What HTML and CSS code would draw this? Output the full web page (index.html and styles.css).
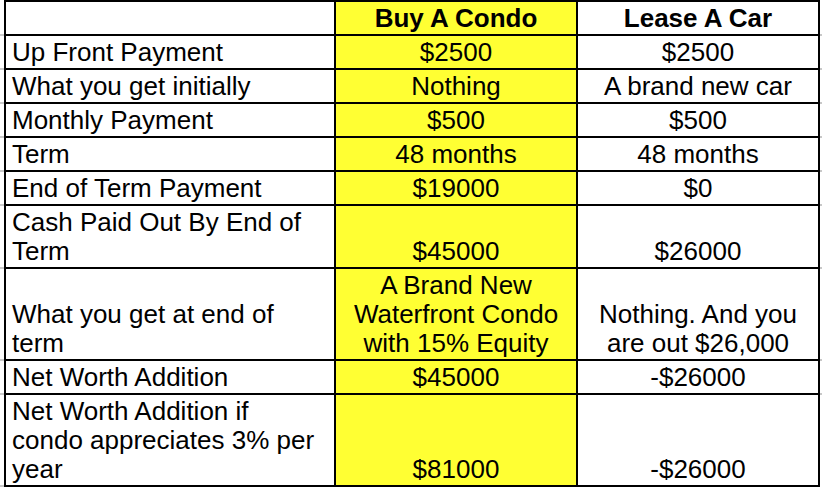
FILE: index.html
```html
<!DOCTYPE html>
<html lang="en">
<head>
<meta charset="utf-8">
<title>Buy A Condo vs Lease A Car</title>
<link rel="stylesheet" href="styles.css">
</head>
<body>
<table class="compare">
  <colgroup>
    <col class="col-label">
    <col class="col-condo">
    <col class="col-car">
  </colgroup>
  <tr class="head">
    <td class="label"></td>
    <td class="condo">Buy A Condo</td>
    <td class="car">Lease A Car</td>
  </tr>
  <tr>
    <td class="label">Up Front Payment</td>
    <td class="condo">$2500</td>
    <td class="car">$2500</td>
  </tr>
  <tr>
    <td class="label">What you get initially</td>
    <td class="condo">Nothing</td>
    <td class="car">A brand new car</td>
  </tr>
  <tr>
    <td class="label">Monthly Payment</td>
    <td class="condo">$500</td>
    <td class="car">$500</td>
  </tr>
  <tr>
    <td class="label">Term</td>
    <td class="condo">48 months</td>
    <td class="car">48 months</td>
  </tr>
  <tr>
    <td class="label">End of Term Payment</td>
    <td class="condo">$19000</td>
    <td class="car">$0</td>
  </tr>
  <tr>
    <td class="label">Cash Paid Out By End of<br>Term</td>
    <td class="condo">$45000</td>
    <td class="car">$26000</td>
  </tr>
  <tr>
    <td class="label">What you get at end of<br>term</td>
    <td class="condo">A Brand New<br>Waterfront Condo<br>with 15% Equity</td>
    <td class="car">Nothing. And you<br>are out $26,000</td>
  </tr>
  <tr>
    <td class="label">Net Worth Addition</td>
    <td class="condo">$45000</td>
    <td class="car">-$26000</td>
  </tr>
  <tr class="last">
    <td class="label">Net Worth Addition if<br>condo appreciates 3% per<br>year</td>
    <td class="condo">$81000</td>
    <td class="car">-$26000</td>
  </tr>
</table>
</body>
</html>
```

FILE: styles.css
```css
html, body {
  margin: 0;
  padding: 0;
  background: #ffffff;
}

body {
  padding: 0 0 0 4px;
}

.compare {
  border-collapse: separate;
  border-spacing: 0;
  border-top: 2px solid #000;
  border-left: 2px solid #000;
  table-layout: fixed;
  width: 816px;
  font-family: "Liberation Sans", Arial, Helvetica, sans-serif;
  font-size: 26px;
  color: #000;
}

.col-label { width: 330px; }
.col-condo { width: 242px; }
.col-car { width: 242px; }

.compare td {
  position: relative;
  border-right: 2px solid #000;
  border-bottom: 2px solid #000;
  line-height: 29px;
  padding: 2px 4px 1px 4px;
  height: 29px;
  vertical-align: bottom;
  text-align: center;
  white-space: nowrap;
}

.compare td.label {
  text-align: left;
  padding-left: 6px;
}

.compare td.condo {
  background: #ffff33;
}

.compare .head td {
  font-weight: bold;
}

/* faint spreadsheet gridline stubs outside the table */
.compare td.label::before {
  content: "";
  position: absolute;
  left: -6px;
  bottom: -2px;
  width: 4px;
  height: 2px;
  background: #c8c8c8;
}

.compare td.car::after {
  content: "";
  position: absolute;
  right: -5px;
  bottom: -2px;
  width: 3px;
  height: 2px;
  background: #c8c8c8;
}

.compare .last td::after {
  content: "";
  position: absolute;
  right: -2px;
  bottom: -5px;
  width: 2px;
  height: 3px;
  background: #c8c8c8;
}

.compare .last td.car::after {
  right: -5px;
  bottom: -5px;
  width: 3px;
  height: 3px;
}
```
